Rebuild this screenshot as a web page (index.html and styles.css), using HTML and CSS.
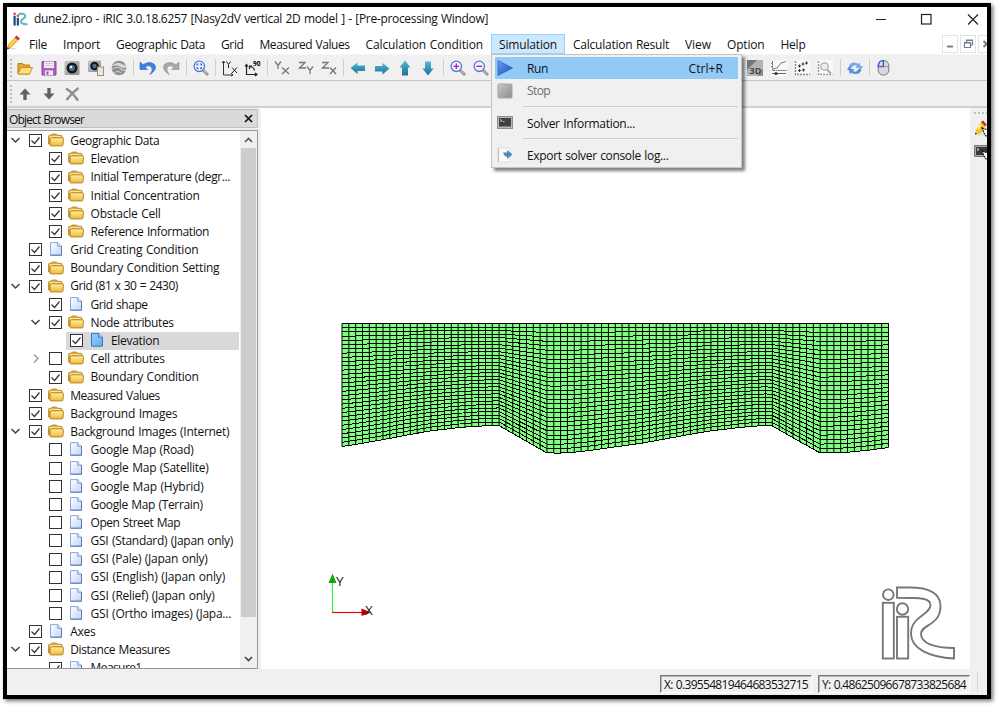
FILE: index.html
```html
<!DOCTYPE html>
<html lang="en">
<head>
<meta charset="utf-8">
<title>iRIC Pre-processing Window</title>
<link rel="stylesheet" href="styles.css">
</head>
<body>
<svg class="defs" width="0" height="0">
  <defs>
    <linearGradient id="gFolder" x1="0" y1="0" x2="0" y2="1"><stop offset="0" stop-color="#fff0a0"/><stop offset="1" stop-color="#edb93c"/></linearGradient>
    <linearGradient id="gDoc" x1="0" y1="0" x2="1" y2="1"><stop offset="0" stop-color="#ffffff"/><stop offset="1" stop-color="#bcd6fa"/></linearGradient>
    <linearGradient id="gDocSel" x1="0" y1="0" x2="1" y2="1"><stop offset="0" stop-color="#9fd0fb"/><stop offset="1" stop-color="#5fa9ee"/></linearGradient>
    <linearGradient id="gArrow" x1="0" y1="0" x2="0" y2="1"><stop offset="0" stop-color="#55b8d8"/><stop offset="1" stop-color="#1b7196"/></linearGradient>
    <linearGradient id="gRun" x1="0" y1="0" x2="1" y2="1"><stop offset="0" stop-color="#6a9df0"/><stop offset="1" stop-color="#1d4fb8"/></linearGradient>
    <linearGradient id="gGrey" x1="0" y1="0" x2="1" y2="1"><stop offset="0" stop-color="#c9c9c9"/><stop offset="1" stop-color="#8a8a8a"/></linearGradient>
    <symbol id="folder" viewBox="0 0 16 13"><path d="M.6 10.500V3Q.6 1.800 1.800 1.800H3L4.200.6H8.500L9.700 1.800H12.700Q14 1.800 14 3V10.500Z" fill="#e3ac38" stroke="#b98a2c"/><path d="M2 4.500V3.200H13" fill="none" stroke="#fff3c0"/><path d="M3.200 4.300H14.400Q15.500 4.300 15.400 5.300L15 11.300Q14.900 12.400 13.800 12.400H3Q2 12.400 2 11.400L2.200 5.300Q2.300 4.300 3.200 4.300Z" fill="url(#gFolder)" stroke="#b8841f"/></symbol>
    <symbol id="doc" viewBox="0 0 13 14"><path d="M1 .6H8.300L12 4.200V13.200H1Z" fill="url(#gDoc)" stroke="#8fa6dc"/><path d="M8.300.6V4.200H12" fill="#e9f1ff" stroke="#7793cf"/><path d="M12 4.200V13.200H1" fill="none" stroke="#5c78b8"/></symbol>
    <symbol id="docsel" viewBox="0 0 13 14"><path d="M1 .6H8.300L12 4.200V13.200H1Z" fill="url(#gDocSel)" stroke="#3a72bd"/><path d="M8.300.6V4.200H12" fill="#b9dcff" stroke="#3a72bd"/></symbol>
    <symbol id="terminal" viewBox="0 0 16 13"><rect x=".5" y=".5" width="15" height="12" fill="#b9b9b9" stroke="#8e8e8e"/><rect x="2" y="2" width="12" height="8.500" fill="#3c4144"/><path d="M3 3.500l2 1-2 1M5.500 5.500h2" stroke="#ddd" fill="none" stroke-width=".8"/></symbol>
    <symbol id="lens" viewBox="0 0 16 16"><path d="M10 10l5 5" stroke="#8b8b8b" stroke-width="2.800"/><path d="M10.500 10l4 4.200" stroke="#d8d8d8" stroke-width="1"/><circle cx="6.300" cy="6.300" r="5.200" fill="#eef2ff" stroke="#5575d8" stroke-width="1.300"/></symbol>
  </defs>
</svg>

<div class="window">
  <header class="titlebar">
    <svg class="app-icon" viewBox="0 0 16 14"><circle cx="1.700" cy="1.500" r="1.400" fill="#e0483e"/><circle cx="5.200" cy="3.500" r="1.400" fill="#e0483e"/><path d="M1.700 3.500V14M5.200 5.700V14" stroke="#1b4f86" stroke-width="2.400"/><path d="M6 1.500H10Q13.500 1.700 13 4.500Q12.500 6 10 7.500Q7.500 9 9 11Q10.500 12.700 15.500 12.700" fill="none" stroke="#5fb9c6" stroke-width="2.200"/></svg>
    <span class="title" data-w="454">dune2.ipro - iRIC 3.0.18.6257 [Nasy2dV vertical 2D model ] - [Pre-processing Window]</span>
    <svg class="win-buttons" viewBox="0 0 111 20"><path d="M5 10.500h10" stroke="#222"/><rect x="50.500" y="5.500" width="9.500" height="9.500" fill="none" stroke="#222" stroke-width="1.200"/><path d="M97 5.500l10 10M107 5.500l-10 10" stroke="#222" stroke-width="1.200"/></svg>
  </header>

  <nav class="menubar">
    <svg class="pencil" viewBox="0 0 13 16"><path d="M0 14.500h8l1-1.500H1z" fill="#ddd"/><path d="M0 14l1-4.500L7.500 2.500l3.500 3-7 7.500z" fill="#f5b32c"/><path d="M2.500 11L8.500 4.500" stroke="#fbdc7a" stroke-width="1.300"/><path d="M7.500 2.500l2-2 3.500 3-2 2z" fill="#cf3a2c"/><path d="M0 14.300l.5-2.300 1.800 1.700z" fill="#222"/></svg>
    <span class="menu" data-w="18">File</span><span class="menu" data-w="37">Import</span><span class="menu" data-w="89">Geographic Data</span><span class="menu" data-w="22.500">Grid</span><span class="menu" data-w="90">Measured Values</span><span class="menu" data-w="117.500">Calculation Condition</span><span class="menu open" data-w="58">Simulation</span><span class="menu" data-w="96">Calculation Result</span><span class="menu" data-w="26">View</span><span class="menu" data-w="37.500">Option</span><span class="menu" data-w="25">Help</span>
    <span class="mdi">
      <i><svg viewBox="0 0 14 16"><path d="M4 10.500h6" stroke="#71808c" stroke-width="2"/></svg></i>
      <i><svg viewBox="0 0 14 16"><path d="M5.500 6V4h6v5H9.500M3.500 6.500h6v5h-6zM3.500 7h6M5.500 4.500h6" fill="none" stroke="#71808c" stroke-width="1.200"/></svg></i>
      <i><svg viewBox="0 0 14 16"><path d="M4.500 5l6 6M10.500 5l-6 6" stroke="#71808c" stroke-width="2"/></svg></i>
    </span>
  </nav>

  <div class="toolbar main">
    <b class="grip"></b>
    <svg class="ic" viewBox="0 0 16 16"><path d="M1 14V3.500H5.500L7 5H12.500V14Z" fill="#e2a72c" stroke="#b98018"/><path d="M1 14L4 7.500H15.500L12.500 14Z" fill="#ffe07c" stroke="#c99322"/></svg>
    <svg class="ic" viewBox="0 0 16 16"><path d="M1 1.500H15V15H1Z" fill="#b45fc4" stroke="#8d489e"/><rect x="3" y="1.500" width="10" height="6.500" fill="#f3f0f5"/><path d="M4 3.500h8M4 5.500h8" stroke="#ccc"/><rect x="4" y="10.500" width="8" height="4.500" fill="#eee"/><rect x="5.500" y="11.500" width="2" height="3" fill="#7b5a86"/></svg>
    <svg class="ic" viewBox="0 0 16 16"><rect x=".5" y="1" width="15" height="14" rx="1.500" fill="url(#gGrey)"/><circle cx="8" cy="8" r="5.500" fill="#15181d"/><circle cx="8" cy="8" r="3" fill="#4e6b90"/><circle cx="7" cy="7" r="1.300" fill="#eaf3ff"/></svg>
    <svg class="ic" viewBox="0 0 16 16"><rect width="13" height="11.500" rx="1" y=".5" fill="url(#gGrey)"/><circle cx="6.500" cy="6" r="4.300" fill="#15181d"/><circle cx="6.500" cy="6" r="2.200" fill="#4e6b90"/><rect x="9.500" y="7" width="6" height="8.500" fill="#dce8f6" stroke="#b08b5c"/></svg>
    <svg class="ic" viewBox="0 0 16 16"><circle cx="8" cy="8" r="7.300" fill="#8d8d8d"/><path d="M.8 6.500Q5 1 10 3.500Q12.500 5 14.500 5L15 8Q11 8.500 8.500 6.500Q5 4.500.8 6.500Z" fill="#d6d6d6"/><path d="M1 9Q7 6 10 9Q12 11 15 10M3 13Q7 10 10 13" fill="none" stroke="#d2d2d2" stroke-width="1.200"/></svg>
    <b class="sep"></b>
    <svg class="ic" viewBox="0 0 16 16"><path d="M0 2v7.500h7.500L5 7q4-3 6.500 0 2 3-1.500 7.500Q18 9 14.500 4.500 10 .5 3 4.700Z" fill="#3f80df" stroke="#2c62bd" stroke-width=".6"/></svg>
    <svg class="ic" viewBox="0 0 16 16"><path d="M16 2v7.500H8.500L11 7q-4-3-6.500 0-2 3 1.500 7.500Q-2 9 1.500 4.500 6 .5 13 4.700Z" fill="#a9a9a9" stroke="#8c8c8c" stroke-width=".6"/></svg>
    <b class="sep"></b>
    <svg class="ic" viewBox="0 0 16 16"><use href="#lens"/><path d="M4 5.500V4h1.500M7 4h1.500v1.500M8.500 7v1.500H7M5.500 8.500H4V7" fill="none" stroke="#294fd0"/></svg>
    <b class="sep"></b>
    <svg class="ic" viewBox="0 0 16 16"><path d="M1.500 1v14h9M0 3l1.500-2L3 3M9 13l2 2-2 1" fill="none" stroke="#333"/><path d="M4.500 1.500l2 3 2-3M6.500 4.500V8M10 7.500l5 5.500M15 7.500L10 13" fill="none" stroke="#222"/></svg>
    <svg class="ic" viewBox="0 0 16 16"><path d="M1.500 5v9.500H12M0 6.500l1.500-2 1.500 2M10 13l2 1.500-2 1.500M9.500 10.500Q9 7 5 6.500M4.500 9V6H7" fill="none" stroke="#222" stroke-width="1.200"/><text x="8" y="5.500" class="tiny">90</text></svg>
    <b class="sep"></b>
    <svg class="ic" viewBox="0 0 16 16"><path d="M1 1.500l3 4 3-4M4 5.500V9M8 7.500l7 6.500M15 7.500L8 14" fill="none" stroke="#777" stroke-width="1.300"/></svg>
    <svg class="ic" viewBox="0 0 16 16"><path d="M1 2.500h6L1.500 8H8M9 6.500l3 4 3-4M12 10.500V14" fill="none" stroke="#777" stroke-width="1.300"/></svg>
    <svg class="ic" viewBox="0 0 16 16"><path d="M1 2.500h6L1.500 8H8M9 7.500l6 6.500M15 7.500L9 14" fill="none" stroke="#777" stroke-width="1.300"/></svg>
    <b class="sep"></b>
    <svg class="ic" viewBox="0 0 16 16"><path d="M.5 8L7.500 2.500v3H15v5.500H7.500v3Z" fill="url(#gArrow)"/></svg>
    <svg class="ic" viewBox="0 0 16 16"><path d="M15.500 8.500L8.500 3V6H1v5.500h7.500V14.500Z" fill="url(#gArrow)"/></svg>
    <svg class="ic" viewBox="0 0 16 16"><path d="M8 .5L13.500 7.500h-2.500v8h-6v-8H2.500Z" fill="url(#gArrow)"/></svg>
    <svg class="ic" viewBox="0 0 16 16"><path d="M8 15.500L13.500 8.500h-2.500V1.500h-6v7H2.500Z" fill="url(#gArrow)"/></svg>
    <b class="sep"></b>
    <svg class="ic" viewBox="0 0 16 16"><use href="#lens"/><path d="M3.500 6.300h5.600M6.300 3.500v5.600" stroke="#b01cb0" stroke-width="1.300"/></svg>
    <svg class="ic" viewBox="0 0 16 16"><use href="#lens"/><path d="M3.500 6.300h5.600" stroke="#b01cb0" stroke-width="1.300"/></svg>
    <b class="gap"></b>
    <svg class="ic" viewBox="0 0 16 16"><path d="M0 0h16v16H0z" fill="#b4b4b4"/><path d="M0 10L10 0H0z" fill="#777"/><path d="M10 16l6-8v8z" fill="#8d8d8d"/><text x="2.500" y="14" class="threed">3D</text></svg>
    <svg class="ic" viewBox="0 0 16 16"><path d="M0 0h16v16H0z" fill="#f9f9f9"/><path d="M1.500 1v9.500H16M0 3.500h1.500M0 6.500h1.500" fill="none" stroke="#777" stroke-dasharray="2 .5"/><path d="M2 9l4-1 4-5 5-1.500" fill="none" stroke="#777"/><path d="M1 13.500h14" stroke="#666"/><circle cx="5" cy="13.500" r="1.600" fill="#333"/></svg>
    <svg class="ic" viewBox="0 0 16 16"><path d="M0 0h16v16H0z" fill="#f9f9f9"/><path d="M1.500 1v13.500h14.500" fill="none" stroke="#888" stroke-width="1.500" stroke-dasharray="2 1"/><path d="M4 6h3M5.500 4.500v3M7.500 4h3M9 2.500v3M11 3h3M12.500 1.500v3M4 10.500h3M5.500 9v3M8 10h3M9.500 8.500v3" stroke="#333"/></svg>
    <svg class="ic" viewBox="0 0 16 16"><path d="M0 0h16v16H0z" fill="#f9f9f9"/><path d="M1.500 1v13.500h14" fill="none" stroke="#999" stroke-width="1.500" stroke-dasharray="2 1"/><circle cx="7.500" cy="6.500" r="3.700" fill="#eee" stroke="#aaa" stroke-width="1.200"/><path d="M10 9.500l4 4" stroke="#aaa" stroke-width="2"/></svg>
    <b class="sep"></b>
    <svg class="ic" viewBox="0 0 16 16"><path d="M1.500 8Q2 2.500 7.500 2.500 10 2.500 11.500 4l1-1.500L14 8H8.500L10 6Q6.500 4 4.500 8z" fill="#78a9ec"/><path d="M14.500 9Q14 14 8.500 14 6 14 4.500 12.500l-1.500 2L1.500 9H7.500L6 11Q9.500 13 11.500 9z" fill="#5b8fdd"/><path d="M11 6h5l-2.500 4z" fill="#78a9ec"/><path d="M0 10h5L2.500 6z" fill="#5b8fdd"/></svg>
    <b class="sep"></b>
    <svg class="ic" viewBox="0 0 16 16"><rect x="2.200" y=".6" width="10.600" height="14.500" rx="5" fill="#d9d9d9" stroke="#777"/><path d="M7.300.7Q2.500 .7 2.300 6.500h5z" fill="#d9e5ff" stroke="#2659dd" stroke-width="1.300"/><path d="M2.500 6.500h10" stroke="#777" stroke-width=".7"/><path d="M7.500 2v4" stroke="#555"/></svg>
  </div>

  <div class="toolbar second">
    <b class="grip"></b>
    <svg class="ic" viewBox="0 0 16 16"><path d="M8 2.500L13.500 8.500H9.700V14H6.300V8.500H2.500Z" fill="#616161"/></svg>
    <svg class="ic" viewBox="0 0 16 16"><path d="M8 13.500L13.500 7.500H9.700V2H6.300V7.500H2.500Z" fill="#616161"/></svg>
    <svg class="ic" viewBox="0 0 16 16"><path d="M2 2.500Q8 6 14 14.500M14.500 2Q8 6.500 2.500 14" fill="none" stroke="#8c8c8c" stroke-width="2.300"/></svg>
  </div>

  <main class="workspace">
    <aside class="browser">
      <div class="dock-title"><span data-w="75">Object Browser</span><svg viewBox="0 0 9 9"><path d="M1 1l7 7M8 1L1 8" stroke="#111" stroke-width="1.700"/></svg></div>
      <div class="tree">
        <div class="rows" id="rows"></div>
        <div class="scroll"><svg viewBox="0 0 9 6"><path d="M1 5l3.500-3.500L8 5" fill="none" stroke="#555" stroke-width="1.600"/></svg><b></b><svg viewBox="0 0 9 6"><path d="M1 1l3.500 3.500L8 1" fill="none" stroke="#444" stroke-width="1.600"/></svg></div>
      </div>
    </aside>
    <section class="view">
      <svg class="canvas" viewBox="261 108 709 561" width="709" height="561">
        <g id="mesh"></g>
        <path d="M332.500 612V583" stroke="#3cf03c" stroke-width="1.200"/><path d="M328.500 583l4-9.500 4 9.500z" fill="#0aa80a"/>
        <path d="M332 612.500h30" stroke="#e01010" stroke-width="1.200"/><path d="M361.500 608.500l9.500 4-9.500 3.500z" fill="#b00000"/>
        <text x="336" y="585.700" class="axis">Y</text><text x="365" y="615" class="axis">X</text>
        <g fill="none" stroke="#777" stroke-width="1.900"><circle cx="888.300" cy="594.700" r="5.300"/><circle cx="902.500" cy="609" r="5.700"/><rect x="882.800" y="602.800" width="11" height="55.700"/><rect x="897" y="616.800" width="11.200" height="41.700"/>
        <path d="M897 587.500H910C928 587.500 940.500 593 940.500 606C940.500 626 921 624 921 634C921 643 934 648 954 648V658.500C930 657.500 911 649 911 633.500C911 616 930.500 615 930.500 605C930.500 598 921 597.700 897 597.700Z"/></g>
      </svg>
    </section>
    <aside class="side">
      <b class="hgrip"></b>
      <svg viewBox="0 0 14 17"><path d="M2 14h9v1.500H2z" fill="#ddd"/><path d="M1 14.500l1-5 5-7 5 3-5 8z" fill="#f6c12c"/><path d="M4 9l3-4" stroke="#fff0a0" stroke-width="1.500"/><path d="M7 2l2-1.500L13 5 11 6z" fill="#c92222"/><path d="M8 8l6 2v6l-2 0-2-3z" fill="#fff" stroke="#211" stroke-width="1.200" stroke-dasharray="2 .7"/><path d="M1 14.500l.3-2 1.700 1.500z" fill="#222"/></svg>
      <svg viewBox="0 0 14 17"><path d="M.5 2.500h16v11H.5z" fill="#aaa" stroke="#777"/><path d="M2 4h12v8H2z" fill="#353b3e"/><path d="M3 5.500l2 1-2 1" stroke="#ddd" fill="none"/><path d="M8 8l6 2v6l-2 0-2-3z" fill="#fff" stroke="#211" stroke-width="1.200" stroke-dasharray="2 .7"/></svg>
    </aside>
  </main>

  <footer class="status">
    <span class="coord"><em data-w="144">X: 0.39554819464683532715</em></span>
    <span class="coord"><em data-w="144">Y: 0.48625096678733825684</em></span>
    <b class="end"></b>
  </footer>

  <div class="dropdown">
    <div class="item hot"><svg viewBox="0 0 16 16"><path d="M1 .5L15.500 8 1 15.500Z" fill="url(#gRun)" stroke="#2b5fc4" stroke-width=".7"/></svg><span data-w="21">Run</span><kbd data-w="34.500">Ctrl+R</kbd></div>
    <div class="item off"><svg viewBox="0 0 16 16"><rect x="1" y="1" width="14" height="14" rx="1" fill="url(#gGrey)" stroke="#a5a5a5"/></svg><span data-w="23">Stop</span></div>
    <hr>
    <div class="item"><svg viewBox="0 0 16 16"><use href="#terminal" y="1" width="16" height="13"/></svg><span data-w="108">Solver Information...</span></div>
    <hr>
    <div class="item last"><svg viewBox="0 0 16 16"><path d="M1 1h12v14H1z" fill="#fbfbfb" stroke="#ddd"/><path d="M1.500 1v14" stroke="#bbb"/><path d="M6 5.500h4V3l5.500 4.500L10 12V9.500H8z" fill="#5587b8"/></svg><span data-w="141.500">Export solver console log...</span></div>
  </div>
</div>
<script src="app.js"></script>
</body>
</html>
```

FILE: styles.css
```css
* { box-sizing: border-box; }
body { margin: 0; padding: 3px; width: 1000px; height: 708px; overflow: hidden; background: #fff; font: 12px/16px "Open Sans", "Noto Sans", sans-serif; color: #111; }
svg { display: block; flex: none; }
.defs { position: absolute; }
[data-w] { white-space: pre; flex: none; word-spacing: .7px; }
.window { position: relative; width: 988px; height: 696px; border: 4px solid #000; background: #f0f0f0; box-shadow: 2px 2px 4px rgba(0,0,0,.55); display: flex; flex-direction: column; }

.titlebar { height: 27px; background: #fff; display: flex; align-items: center; padding: 0 5px 4px 6px; }
.app-icon { width: 15px; height: 14px; margin-right: 6px; }
.win-buttons { width: 111px; height: 20px; margin-left: auto; }

.menubar { height: 20px; background: #fff; display: flex; position: relative; overflow: hidden; }
.pencil { width: 13px; height: 16px; margin: 1px 1px 0 0; }
.menu { padding: 1px 8px 0; line-height: 20px; }
.menu.open { background: #cce8ff; box-shadow: inset 0 0 0 1px #99d1ff; }
.mdi { position: absolute; left: 935px; top: 1px; display: flex; gap: 2px; }
.mdi i { width: 16px; height: 18px; border: 1px solid #e3e3e3; }
.mdi svg { width: 14px; height: 16px; }

.toolbar { display: flex; align-items: center; background: #f0f0f0; border-bottom: 1px solid #c4c4c4; }
.toolbar.main { height: 27px; border-top: 1px solid #f7f7f7; }
.toolbar.second { height: 27px; border-bottom: 2px solid #d0d0d0; padding-top: 1px; }
.grip { width: 2px; height: 18px; margin: 0 1.700px 0 3px; background: repeating-linear-gradient(#bdbdbd 0 2px, transparent 2px 4px); }
.ic { width: 16px; height: 16px; margin: 0 3.700px; overflow: visible; }
.sep { width: 1px; height: 17px; margin: 0 2.300px 0 2.500px; background: #cfcfcf; }
.gap { width: 251px; flex: none; }
.tiny { font: 700 6.500px "Open Sans", sans-serif; }
.threed { font: 700 9px "Open Sans", sans-serif; fill: #444; }

.workspace { height: 561px; display: flex; }
.browser { width: 251px; padding-top: 1px; }
.dock-title { height: 19px; display: flex; align-items: center; justify-content: space-between; background: #dadada; border: 1px solid #bfbfbf; border-left: 0; padding: 2px 4px 0 2px; }
.dock-title svg { width: 9px; height: 9px; margin-top: -3px; }
.tree { height: 539px; margin-top: 2px; display: flex; background: #fff; border: 1px solid #9097a0; border-left: 0; }
.rows { flex: 1; overflow: hidden; padding-top: .6px; }
.scroll { width: 17px; background: #f0f0f0; display: flex; flex-direction: column; align-items: center; padding: 6px 1px 0 0; }
.scroll svg { width: 9px; height: 6px; }
.scroll b { width: 15px; height: 469px; margin: 5px 0 39px; background: #cdcdcd; }
.row { height: 18.200px; display: flex; align-items: center; position: relative; }
.row span { padding-top: .6px; }
.row.l1 { padding-left: 20.300px; }
.row.l2 { padding-left: 40.600px; }
.row.sel { background: linear-gradient(to right, transparent 59px, #d9d9d9 59px 232px, transparent 232px); }
.exp { width: 11px; height: 11px; margin: 0 8px 0 3px; }
.box { width: 13px; height: 13px; margin-right: 6px; }
.node { width: 16px; height: 15px; margin-right: 6.300px; }

.view { width: 712px; padding-left: 3px; }
.canvas { background: #fff; }
.axis { font: 13.500px "Open Sans", sans-serif; fill: #222; }
.side { width: 17px; overflow: hidden; padding: 4px 0 0 4px; }
.side svg { width: 14px; height: 17px; margin-bottom: 6px; }
.hgrip { display: block; width: 14px; height: 2px; margin-bottom: 6px; background: repeating-linear-gradient(to right, #bdbdbd 0 2px, transparent 2px 4px); }

.status { flex: 1; display: flex; padding: 6px 0 0 653px; gap: 6px; }
.coord { width: 152px; height: 18px; border: 1px solid; border-color: #777 #fff #fff #777; box-shadow: inset 1px 1px 0 #b5b5b5; padding-left: 3px; line-height: 17px; }
.coord em { font-style: normal; display: block; }
.end { width: 1px; height: 20px; margin: -3px 0 0 1px; background: #d5d5d5; }

.dropdown { position: absolute; left: 484px; top: 47px; width: 251px; height: 114px; padding: 2px 3px; background: #f0f0f0; border: 1px solid #c3c3c3; box-shadow: 3px 3px 3px rgba(0,0,0,.5); }
.item { height: 22px; display: flex; align-items: center; padding: 1px 15px 0 2px; }
.item.off { height: 23px; }
.item svg { width: 16px; height: 16px; margin: -1px 14px 0 0; }
.item kbd { font: inherit; margin-left: auto; }
.hot { background: #91c9f7; }
.off { color: #6d6d6d; }
.dropdown hr { height: 1px; border: 0; background: #d0d0d0; margin: 4px 0 5px 28px; }
```

FILE: app.js
```js
// [level, expander, checked, icon, label, label width]
const nodes = [
  [0, 'v', 1, 'folder', 'Geographic Data', 89], [1, '', 1, 'folder', 'Elevation', 48.5],
  [1, '', 1, 'folder', 'Initial Temperature (degr...', 139.5], [1, '', 1, 'folder', 'Initial Concentration', 109],
  [1, '', 1, 'folder', 'Obstacle Cell', 70], [1, '', 1, 'folder', 'Reference Information', 118.5],
  [0, '', 1, 'doc', 'Grid Creating Condition', 128], [0, '', 1, 'folder', 'Boundary Condition Setting', 149],
  [0, 'v', 1, 'folder', 'Grid (81 x 30 = 2430)', 107.5], [1, '', 1, 'doc', 'Grid shape', 57],
  [1, 'v', 1, 'folder', 'Node attributes', 83], [2, '', 1, 'docsel', 'Elevation', 48.5],
  [1, '>', 0, 'folder', 'Cell attributes', 74], [1, '', 1, 'folder', 'Boundary Condition', 108],
  [0, '', 1, 'folder', 'Measured Values', 89.5], [0, '', 1, 'folder', 'Background Images', 107],
  [0, 'v', 1, 'folder', 'Background Images (Internet)', 159], [1, '', 0, 'doc', 'Google Map (Road)', 103],
  [1, '', 0, 'doc', 'Google Map (Satellite)', 118], [1, '', 0, 'doc', 'Google Map (Hybrid)', 113],
  [1, '', 0, 'doc', 'Google Map (Terrain)', 112], [1, '', 0, 'doc', 'Open Street Map', 89.5],
  [1, '', 0, 'doc', 'GSI (Standard) (Japan only)', 142.5], [1, '', 0, 'doc', 'GSI (Pale) (Japan only)', 117],
  [1, '', 0, 'doc', 'GSI (English) (Japan only)', 134.5], [1, '', 0, 'doc', 'GSI (Relief) (Japan only)', 124],
  [1, '', 0, 'doc', 'GSI (Ortho images) (Japa...', 140.5], [0, '', 1, 'doc', 'Axes', 25],
  [0, 'v', 1, 'folder', 'Distance Measures', 99.5], [1, '', 1, 'doc', 'Measure1', 51]
];
const chevrons = { v: '<path d="M1.500 3l4 4 4-4" fill="none" stroke="#444" stroke-width="1.500"/>', '>': '<path d="M4 1.500l4 4-4 4" fill="none" stroke="#999" stroke-width="1.400"/>', '': '' };
document.getElementById('rows').innerHTML = nodes.map(([lv, ex, on, icon, label, w]) =>
  `<div class="row l${lv}${icon === 'docsel' ? ' sel' : ''}"><svg class="exp" viewBox="0 0 11 11">${chevrons[ex]}</svg>` +
  `<svg class="box" viewBox="0 0 13 13"><rect x=".5" y=".5" width="12" height="12" fill="#fff" stroke="#333"/>${on ? '<path d="M2.500 6.500l3 3 5-6" fill="none" stroke="#333" stroke-width="1.200"/>' : ''}</svg>` +
  `<svg class="node"><use href="#${icon}" width="16" height="14"/></svg><span data-w="${w}">${label}</span></div>`).join('');

// Track each label so that it fills its nominal width.
document.querySelectorAll('[data-w]').forEach(el => {
  const range = document.createRange();
  range.selectNodeContents(el);
  const natural = range.getBoundingClientRect().width;
  el.style.letterSpacing = (el.dataset.w - natural) / el.textContent.length + 'px';
});

// Structured mesh: 81 x 30 nodes between a flat surface and the dune bed.
const bed = [[342, 446.5], [358, 444], [385, 439.3], [410, 434.5], [430, 431], [455, 428], [475, 426.2], [499, 425.5], [547, 453], [566, 453], [590, 450.5], [610, 447.6], [640, 443.5], [665, 439], [690, 434.3], [710, 431], [735, 428], [755, 426], [771.500, 425.500], [820, 453], [845, 452.500], [870, 450], [888.500, 447.500]];
const top0 = 323.5, left = 342, right = 888.5, ni = 81, nj = 30;
const bedAt = x => {
  const k = Math.min(bed.length - 2, Math.max(0, bed.findIndex(p => p[0] > x) - 1));
  if (x >= right) return bed[bed.length - 1][1];
  const [x0, y0] = bed[k], [x1, y1] = bed[k + 1];
  return y0 + (y1 - y0) * (x - x0) / (x1 - x0);
};
const xs = Array.from({ length: ni }, (_, i) => left + (right - left) * i / (ni - 1));
const outline = `M${left} ${top0}H${right}` + xs.slice().reverse().map(x => `L${x} ${bedAt(x)}`).join('') + 'Z';
let cols = '', lines = '';
xs.forEach(x => { cols += `M${x} ${top0}V${bedAt(x)}`; });
for (let j = 0; j < nj; j++) {
  const f = j / (nj - 1);
  lines += xs.map((x, i) => `${i ? 'L' : 'M'}${x} ${top0 + (bedAt(x) - top0) * f}`).join('');
}
document.getElementById('mesh').innerHTML = `<path d="${outline}" fill="#80ff80"/><path d="${cols}" stroke="#000" fill="none"/><path d="${lines}" stroke="#000" fill="none" shape-rendering="crispEdges"/>`;
```
